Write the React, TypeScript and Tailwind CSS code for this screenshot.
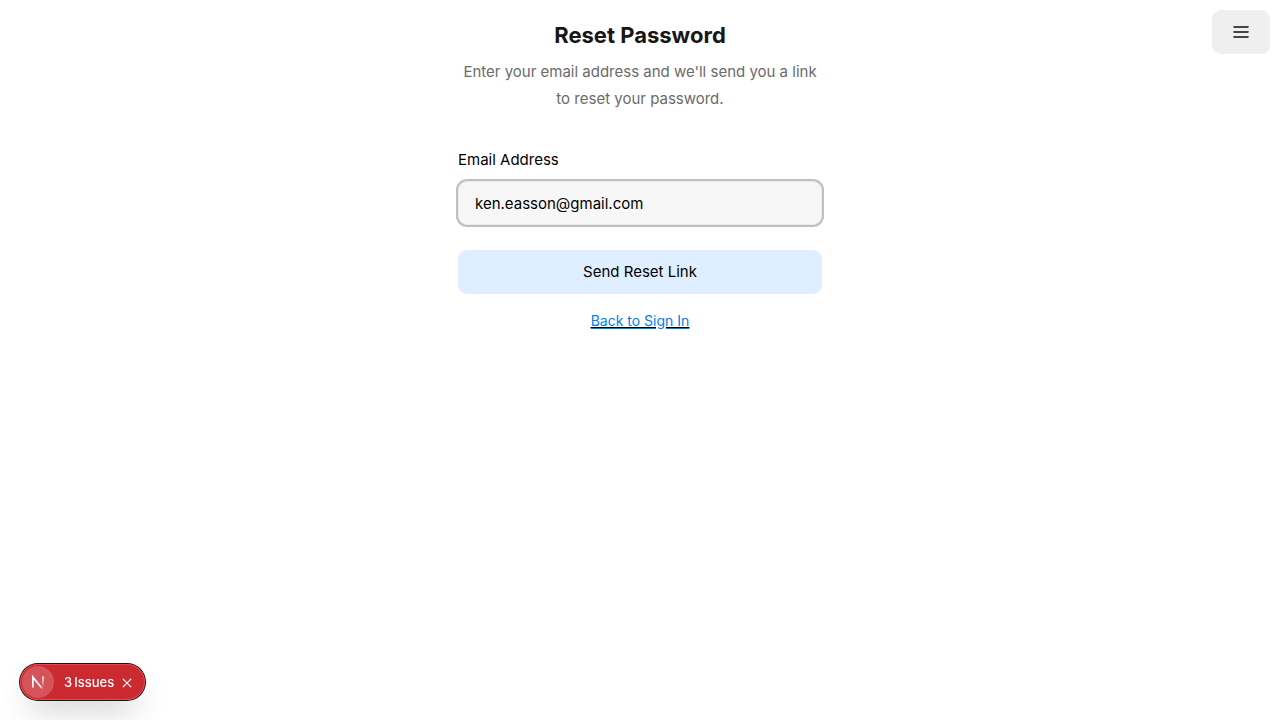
export default function App() {
  return (
    <div className="relative min-h-screen bg-white font-['Inter',sans-serif] text-base text-black">
      <button
        type="button"
        aria-label="Open menu"
        className="fixed top-2.5 right-2.5 flex h-11 w-[58px] items-center justify-center rounded-[9px] bg-[#efefef] text-[#444444]"
      >
        <svg width="16" height="16" viewBox="0 0 16 16" fill="currentColor" aria-hidden="true">
          <rect x="0.5" y="2" width="15" height="2" rx="0.2" />
          <rect x="0.5" y="7" width="15" height="2" rx="0.2" />
          <rect x="0.5" y="12" width="15" height="2" rx="0.2" />
        </svg>
      </button>

      <main className="mx-auto flex w-full max-w-[364px] flex-col pt-5">
        <header className="text-center">
          <h1 className="text-[22px] leading-[30px] font-bold text-[#171717]">Reset Password</h1>
          <p className="mt-2 text-[15px] leading-[27px] text-[#6b6b6b]">
            Enter your email address and we'll send you a link to reset your password.
          </p>
        </header>
        <form className="mt-9 flex flex-col" onSubmit={(e) => e.preventDefault()}>
          <label htmlFor="email" className="text-[15px] leading-6">
            Email Address
          </label>
          <input
            id="email"
            type="email"
            defaultValue="ken.easson@gmail.com"
            className="mt-[9px] h-11 rounded-[9px] border border-[#ebebeb] bg-[#f7f7f7] px-4 text-[15px] ring-2 ring-[#c0c0c0] outline-none"
          />
          <button type="submit" className="mt-[25px] h-11 rounded-[9px] bg-[#e0efff] text-[15px]">
            Send Reset Link
          </button>
        </form>
        <a
          href="#sign-in"
          className="mt-[15px] self-center text-sm leading-6 text-[#0080f0] underline decoration-[#0080f0] decoration-2 underline-offset-1"
        >
          <span className="underline decoration-black decoration-1 underline-offset-1">Back to Sign In</span>
        </a>
      </main>

      <div className="fixed bottom-5 left-5 flex h-9 items-center rounded-full bg-[#ca2a30] pl-0.5 text-[13px] text-white shadow-[0_0_0_1px_#171717,inset_0_0_0_1px_#e5484d,0_16px_32px_-8px_rgba(0,0,0,0.24)]">
        <button type="button" aria-label="Open developer tools" className="flex size-8 items-center justify-center rounded-full bg-white/20">
          <svg width="32" height="32" viewBox="0 0 40 40" fill="none" aria-hidden="true">
            <defs>
              <linearGradient id="diag" x1="18" y1="18" x2="27" y2="29" gradientUnits="userSpaceOnUse">
                <stop offset="0.6" stopColor="white" />
                <stop offset="1" stopColor="white" stopOpacity="0" />
              </linearGradient>
              <linearGradient id="stem" x1="27" y1="13" x2="27" y2="27" gradientUnits="userSpaceOnUse">
                <stop stopColor="white" />
                <stop offset="1" stopColor="white" stopOpacity="0" />
              </linearGradient>
            </defs>
            <path d="M13.6 27V14L25.4 28.5" stroke="url(#diag)" strokeWidth="2.1" />
            <path d="M26.2 13V27" stroke="url(#stem)" strokeWidth="2.1" />
          </svg>
        </button>
        <button type="button" className="ml-2.5 flex gap-0.5 pt-px font-medium">
          <span>3</span>
          <span>Issues</span>
        </button>
        <button type="button" aria-label="Dismiss issues" className="mr-2 ml-[3px] flex size-5 items-center justify-center pt-px">
          <svg width="12" height="12" viewBox="0 0 14 14" fill="currentColor" aria-hidden="true">
            <path d="M3.08889 11.8384L2.62486 12.3024L1.69678 11.3744L2.16082 10.9103L6.07178 6.99937L2.16082 3.08841L1.69678 2.62437L2.62486 1.69629L3.08889 2.16033L6.99986 6.07129L10.9108 2.16033L11.3749 1.69629L12.3029 2.62437L11.8389 3.08841L7.92793 6.99937L11.8389 10.9103L12.3029 11.3744L11.3749 12.3024L10.9108 11.8384L6.99986 7.92744L3.08889 11.8384Z" />
          </svg>
        </button>
      </div>
    </div>
  );
}
